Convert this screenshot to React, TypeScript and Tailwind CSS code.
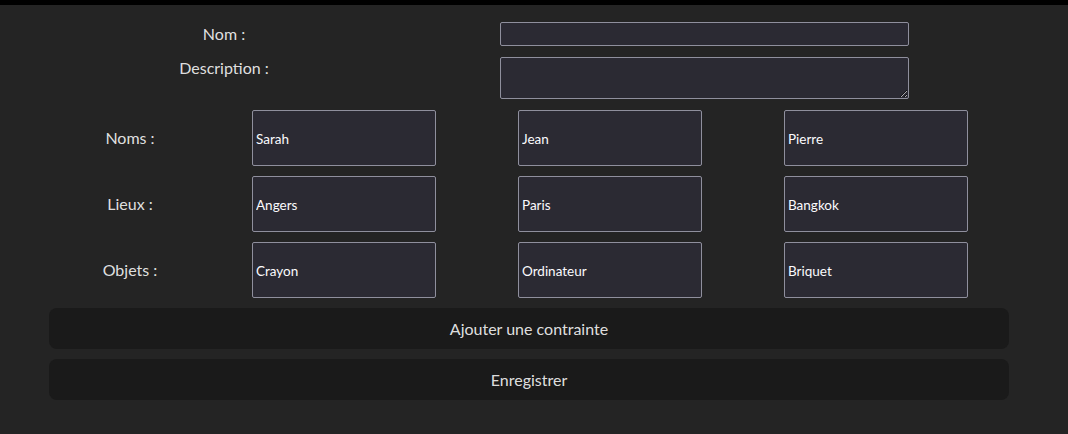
import { useState } from "react"

const rows = [
  { label: "Noms :", values: ["Sarah", "Jean", "Pierre"] },
  { label: "Lieux :", values: ["Angers", "Paris", "Bangkok"] },
  { label: "Objets :", values: ["Crayon", "Ordinateur", "Briquet"] },
]

const field =
  "bg-[#2b2a33] border border-[#8f8f9d] rounded-[2px] text-[#fbfbfe] text-[13.5px] px-[3px] pt-[2px] outline-none"

export default function App() {
  const [nom, setNom] = useState("")
  const [description, setDescription] = useState("")

  return (
    <div className="min-h-[434px] bg-[#242424] text-[rgba(255,255,255,0.87)] font-['Lato',sans-serif]">
      <div className="h-[5px] bg-black" />

      <div className="pt-[17px] flex flex-col gap-[11px]">
        <div className="flex items-start">
          <span className="w-[448px] text-center text-[16px] leading-[24px]">Nom :</span>
          <input
            value={nom}
            onChange={(e) => setNom(e.target.value)}
            className={`${field} ml-[52px] w-[409px] h-[24px]`}
          />
        </div>
        <div className="flex items-start">
          <span className="w-[448px] text-center text-[16px] leading-[22px]">Description :</span>
          <textarea
            value={description}
            onChange={(e) => setDescription(e.target.value)}
            className={`${field} ml-[52px] w-[409px] h-[42px]`}
          />
        </div>
      </div>

      <div className="mt-[11px] flex flex-col gap-[10px]">
        {rows.map((row) => (
          <div key={row.label} className="flex items-center">
            <span className="w-[252px] pl-[8px] text-center text-[16px]">{row.label}</span>
            <div className="flex gap-[82px]">
              {row.values.map((v) => (
                <input key={v} defaultValue={v} className={`${field} w-[184px] h-[56px]`} />
              ))}
            </div>
          </div>
        ))}
      </div>

      <div className="mt-[10px] ml-[49px] w-[960px] flex flex-col gap-[10px]">
        <button className="h-[41px] rounded-[8px] bg-[#1a1a1a] text-[16px]">Ajouter une contrainte</button>
        <button className="h-[41px] rounded-[8px] bg-[#1a1a1a] text-[16px]">Enregistrer</button>
      </div>
    </div>
  )
}
